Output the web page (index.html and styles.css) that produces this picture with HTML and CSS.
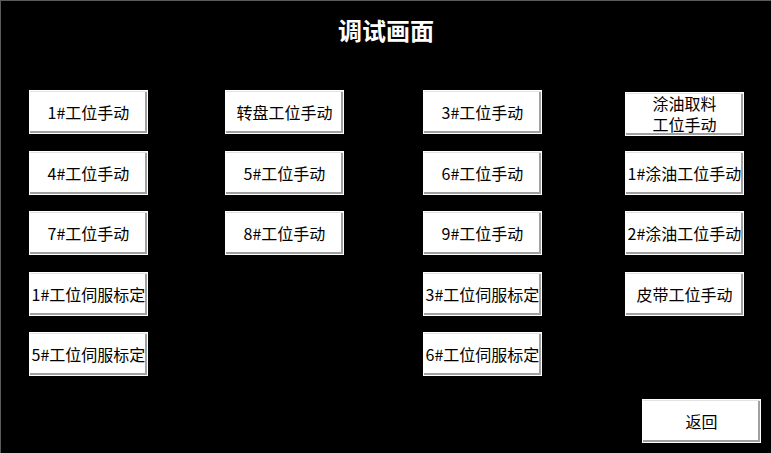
FILE: index.html
```html
<!DOCTYPE html>
<html lang="zh">
<head>
<meta charset="utf-8">
<title>调试画面</title>
<link rel="stylesheet" href="styles.css">
</head>
<body>
<div class="screen">
  <h1 class="title">调试画面</h1>
  <div class="grid">
    <div class="btn">1#工位手动</div>
    <div class="btn">转盘工位手动</div>
    <div class="btn">3#工位手动</div>
    <div class="btn two">涂油取料<br>工位手动</div>

    <div class="btn">4#工位手动</div>
    <div class="btn">5#工位手动</div>
    <div class="btn">6#工位手动</div>
    <div class="btn">1#涂油工位手动</div>

    <div class="btn">7#工位手动</div>
    <div class="btn">8#工位手动</div>
    <div class="btn">9#工位手动</div>
    <div class="btn">2#涂油工位手动</div>

    <div class="btn">1#工位伺服标定</div>
    <div class="slot"></div>
    <div class="btn">3#工位伺服标定</div>
    <div class="btn">皮带工位手动</div>

    <div class="btn">5#工位伺服标定</div>
    <div class="slot"></div>
    <div class="btn">6#工位伺服标定</div>
    <div class="slot"></div>
  </div>
  <div class="footer">
    <div class="btn">返回</div>
  </div>
</div>
</body>
</html>
```

FILE: styles.css
```css
html, body {
  margin: 0;
  padding: 0;
  background: #000;
}

.screen {
  width: 771px;
  height: 453px;
  box-sizing: border-box;
  border-top: 1px solid #5a5a5a;
  border-left: 1px solid #5a5a5a;
  background: #000;
  font-family: "Noto Sans CJK SC", "Microsoft YaHei", sans-serif;
  overflow: hidden;
}

.title {
  margin: 0 0 44px 0;
  padding-top: 13px;
  height: 32px;
  line-height: 32px;
  text-align: center;
  color: #fff;
  font-size: 24px;
  font-weight: bold;
}

.grid {
  margin-left: 28px;
  display: grid;
  grid-template-columns: 196px 198px 202px 119px;
  grid-template-rows: 61px 60px 61px 60px 44px;
}

.btn {
  width: 119px;
  height: 44px;
  box-sizing: border-box;
  background: #fff;
  border: 1px solid #fff;
  box-shadow: inset 0 1px 0 #e3e3e3, inset -2px -2px 0 #a0a0a0;
  display: flex;
  align-items: center;
  justify-content: center;
  text-align: center;
  color: #000;
  font-size: 16px;
  line-height: 21px;
  white-space: nowrap;
}

.two {
  margin-top: 2px;
}

.footer {
  display: flex;
  justify-content: flex-end;
  padding-right: 10px;
  margin-top: 23px;
}
```
